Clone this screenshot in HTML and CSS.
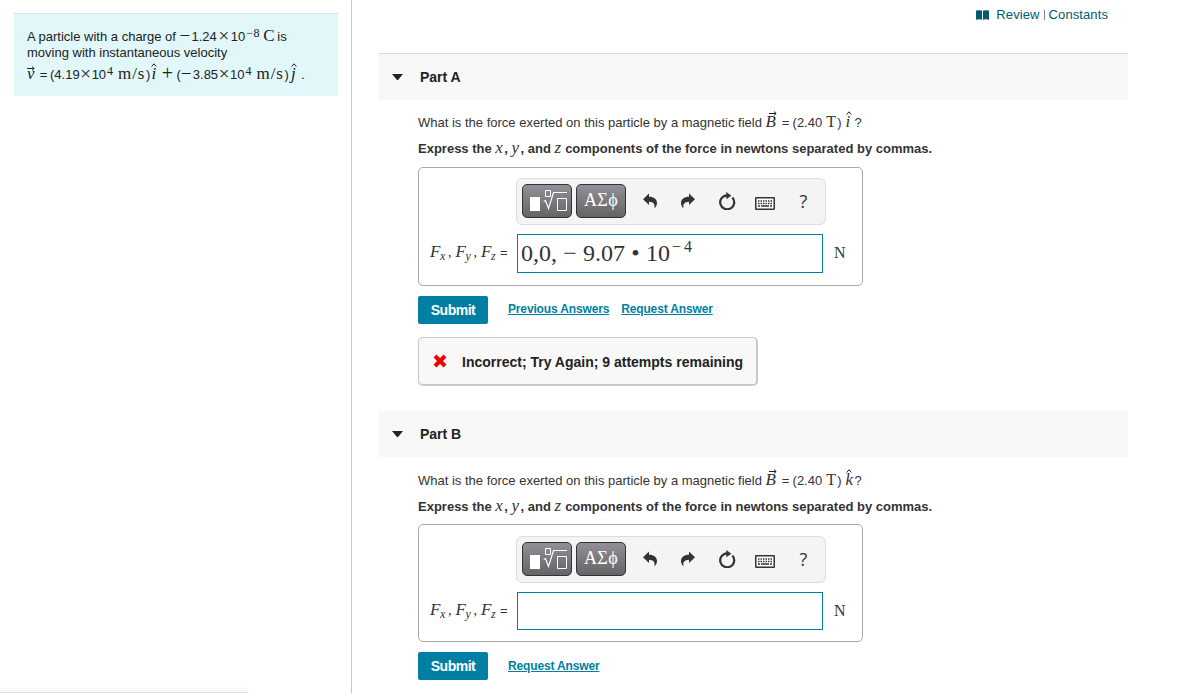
FILE: index.html
```html
<!DOCTYPE html>
<html lang="en">
<head>
    <meta charset="UTF-8">
    <meta name="viewport" content="width=device-width, initial-scale=1.0">
    <title>Magnetic force on a particle</title>
    <link rel="stylesheet" href="styles.css">
</head>
<body>
    <!-- shared icons -->
    <svg class="sprite" width="0" height="0">
        <symbol id="undo" viewBox="0 0 14 16">
            <path d="M0 6.200 6 .5v3.300C11 3.800 14 6.500 14 10c0 2-1 4-2.500 5.500C12.300 11 10.500 9 6 8.800v3.200z"/>
        </symbol>
        <symbol id="reset" viewBox="0 0 18 18">
            <path d="M10 3.300H9a7 7 0 1 0 5.300 2.200" fill="none" stroke="#333" stroke-width="2.200"/>
            <path d="M8.300 0 13.300 3.800 8.300 7.300z"/>
        </symbol>
        <symbol id="keyboard" viewBox="0 0 20 13">
            <rect x=".75" y=".75" width="18.500" height="11.500" rx=".5" fill="#fff" stroke="#333" stroke-width="1.500"/>
            <path d="M3 4h14M3 6.500h14" stroke="#333" stroke-width="1.300" stroke-dasharray="1.500 1" fill="none"/>
            <path d="M3 9h2M6 9h8M15 9h2" stroke="#333" stroke-width="1.300" fill="none"/>
        </symbol>
        <symbol id="root" viewBox="0 0 48 32">
            <path d="M7 12h10v14H7z" fill="#fff"/>
            <path d="M22.500 5.500h5v6h-5zM34.500 13.500h9v12h-9z" fill="none" stroke="#fff"/>
            <path d="M20.700 16.500 22.500 15.500l3 8L30.500 7.500H44" fill="none" stroke="#fff" stroke-width="1.200"/>
        </symbol>
        <symbol id="arrow" viewBox="0 0 8 5">
            <path d="M0 2.500h7M5 .5l2.200 2L5 4.500" fill="none" stroke="#222"/>
        </symbol>
        <symbol id="caron" viewBox="0 0 6 4">
            <path d="M.7 3.500 3 .8l2.300 2.700" fill="none" stroke="#222"/>
        </symbol>
    </svg>

    <aside class="sidebar">
        <div class="intro">
            <p class="charge">A particle with a charge of <span class="formula"><span class="minus">−</span><span>1.24</span><span class="times">×</span><span>10</span><span class="power wide">−8</span><span class="coulomb">C</span></span>is</p>
            <p>moving with instantaneous velocity</p>
            <p class="velocity"><span class="formula"><span class="vec v">v<svg class="arrow"><use href="#arrow"/></svg></span><span class="equals">=</span><span>(4.19</span><span class="times">×</span><span>10</span><span class="power">4</span><span class="unit">m/s</span><span>)</span><span class="hat">i<svg><use href="#caron"/></svg></span><span class="plus">+</span><span>(</span><span class="minus">−</span><span>3.85</span><span class="times">×</span><span>10</span><span class="power">4</span><span class="unit">m/s</span><span>)</span><span class="hat j">j<svg><use href="#caron"/></svg></span><span class="stop">.</span></span></p>
        </div>
    </aside>

    <main class="content">
        <div class="links">
            <svg class="book" viewBox="0 0 13 10"><path d="M0 .5Q3.500-.2 6 .5V9.700Q3.500 9 0 9.700zM13 .5Q9.500-.2 7 .5V9.700q2.500-.7 6 0z"/></svg>
            <a href="#">Review</a><i></i><a href="#">Constants</a>
        </div>

        <section class="part part-a">
            <h2><span class="caret"></span>Part A</h2>
            <div class="part-body">
                <p class="question">What is the force exerted on this particle by a magnetic field <span class="formula"><span class="vec big">B<svg class="arrow"><use href="#arrow"/></svg></span><span class="equals">=</span><span>(2.40</span><span class="tesla">T</span><span>)</span><span class="hat far">i<svg><use href="#caron"/></svg></span><span>?</span></span></p>
                <p class="instruction">Express the <em class="x">x</em>, <em class="y">y</em>, and <em class="z">z</em> components of the force in newtons separated by commas.</p>
                <div class="answer-box">
                    <div class="toolbar">
                        <button class="dark"><svg><use href="#root"/></svg></button>
                        <button class="dark">ΑΣϕ</button>
                        <button class="tool"><svg class="undo"><use href="#undo"/></svg></button>
                        <button class="tool"><svg class="undo redo"><use href="#undo"/></svg></button>
                        <button class="tool"><svg class="reset"><use href="#reset"/></svg></button>
                        <button class="tool"><svg class="keyboard"><use href="#keyboard"/></svg></button>
                        <button class="tool">?</button>
                    </div>
                    <div class="entry">
                        <div class="label"><em>F</em><sub>x</sub><span>,</span><em>F</em><sub>y</sub><span>,</span><em>F</em><sub>z</sub><b>=</b></div>
                        <div class="field">0,0,<span class="neg">−</span>9.07<span class="dot">•</span>10<sup>−<span>4</span></sup></div>
                        <div class="newton">N</div>
                    </div>
                </div>
                <div class="actions">
                    <button class="submit">Submit</button>
                    <a href="#">Previous Answers</a>
                    <a href="#">Request Answer</a>
                </div>
                <div class="feedback">
                    <svg viewBox="0 0 14 14"><path d="M2 2l10 10M12 2L2 12" stroke="#f00000" stroke-width="4"/></svg>
                    Incorrect; Try Again; 9 attempts remaining
                </div>
            </div>
        </section>

        <section class="part part-b">
            <h2><span class="caret"></span>Part B</h2>
            <div class="part-body">
                <p class="question">What is the force exerted on this particle by a magnetic field <span class="formula"><span class="vec big">B<svg class="arrow"><use href="#arrow"/></svg></span><span class="equals">=</span><span>(2.40</span><span class="tesla">T</span><span>)</span><span class="hat far k">k<svg><use href="#caron"/></svg></span><span>?</span></span></p>
                <p class="instruction">Express the <em class="x">x</em>, <em class="y">y</em>, and <em class="z">z</em> components of the force in newtons separated by commas.</p>
                <div class="answer-box">
                    <div class="toolbar">
                        <button class="dark"><svg><use href="#root"/></svg></button>
                        <button class="dark">ΑΣϕ</button>
                        <button class="tool"><svg class="undo"><use href="#undo"/></svg></button>
                        <button class="tool"><svg class="undo redo"><use href="#undo"/></svg></button>
                        <button class="tool"><svg class="reset"><use href="#reset"/></svg></button>
                        <button class="tool"><svg class="keyboard"><use href="#keyboard"/></svg></button>
                        <button class="tool">?</button>
                    </div>
                    <div class="entry">
                        <div class="label"><em>F</em><sub>x</sub><span>,</span><em>F</em><sub>y</sub><span>,</span><em>F</em><sub>z</sub><b>=</b></div>
                        <div class="field"></div>
                        <div class="newton">N</div>
                    </div>
                </div>
                <div class="actions">
                    <button class="submit">Submit</button>
                    <a href="#">Request Answer</a>
                </div>
            </div>
        </section>
    </main>
</body>
</html>
```

FILE: styles.css
```css
* {
    margin: 0;
    padding: 0;
    box-sizing: border-box;
}

body {
    display: flex;
    height: 693px;
    overflow: hidden;
    background-color: #fff;
    color: #333;
    font-family: "Liberation Sans", Arial, sans-serif;
    font-size: 13px;
}

.sprite {
    position: absolute;
}

button {
    border: none;
    background: none;
    font-family: inherit;
    color: inherit;
}

/* Sidebar */
.sidebar {
    display: flex;
    flex-direction: column;
    justify-content: space-between;
    width: 352px;
    flex: none;
    padding: 13px 13px 0 14px;
    border-right: 1px solid #b9c9da;
}

.sidebar::after {
    content: "";
    width: 248px;
    height: 1px;
    margin-left: -14px;
    background-color: #e2e2e2;
    box-shadow: 0 0 6px rgba(0, 0, 0, 0.25);
}

.intro {
    width: 324px;
    height: 83px;
    padding: 13px 13px 0;
    border-top: 1px solid #d5e1e4;
    background-color: #e1f7f9;
    color: #222;
    line-height: 16px;
    white-space: nowrap;
}

.intro p {
    height: 16px;
}

.intro .charge {
    height: 18px;
}

.intro .velocity {
    padding-top: 3px;
}

/* Formulas */
.formula {
    display: inline-flex;
    align-items: baseline;
    height: 16px;
    line-height: 16px;
}

.minus,
.times,
.plus,
.power,
.coulomb,
.unit,
.tesla,
.vec,
.hat {
    font-family: "Liberation Serif", "Times New Roman", serif;
}

.minus {
    width: 12px;
    font-size: 19px;
    transform: translateY(1px);
}

.times {
    width: 12px;
    font-size: 19px;
    text-align: center;
    transform: translateY(1px);
}

.charge .times {
    width: 14px;
}

.plus {
    width: 18px;
    font-size: 20px;
    text-align: center;
    transform: translateY(1px);
}

.power {
    position: relative;
    top: -4px;
    width: 6px;
    margin-left: 1px;
    font-size: 12px;
}

.power.wide {
    width: 15px;
    letter-spacing: 0.5px;
}

.coulomb {
    width: 16px;
    padding-left: 2px;
    font-size: 17px;
}

.unit {
    width: 33px;
    padding-left: 5px;
    font-size: 17px;
    letter-spacing: 0.9px;
}

.tesla {
    width: 15px;
    padding-left: 4px;
    font-size: 16px;
}

.equals {
    width: 13px;
    text-align: center;
}

.big + .equals {
    width: 14px;
}

.vec,
.hat {
    position: relative;
    font-size: 17px;
    font-style: italic;
}

.vec {
    width: 10px;
}

.vec.big {
    width: 13px;
}

.arrow {
    position: absolute;
    top: 0;
    left: 0;
    width: 8px;
    height: 5px;
}

.big .arrow {
    top: -3px;
    left: 3px;
}

.hat {
    width: 8px;
    padding-left: 1px;
}

.hat.j {
    width: 12px;
    padding-left: 2px;
}

.hat.far {
    width: 13px;
    padding-left: 4px;
}

.hat svg {
    position: absolute;
    top: -3px;
    right: 1px;
    width: 6px;
    height: 4px;
}

.hat.j svg {
    right: 4px;
}

.hat.far svg {
    right: 3px;
}

/* Content */
.content {
    width: 750px;
    margin-left: 26px;
}

.links {
    display: flex;
    align-items: center;
    justify-content: flex-end;
    height: 53px;
    padding: 0 20px 24px 0;
    color: #005a70;
}

.links a {
    color: #005a70;
    text-decoration: none;
    letter-spacing: 0.1px;
}

.links i {
    width: 1px;
    height: 10px;
    margin: 0 4px;
    background-color: #888;
}

.book {
    width: 13px;
    height: 10px;
    margin-right: 7px;
    fill: currentColor;
}

.part h2 {
    display: flex;
    align-items: center;
    height: 46px;
    padding-left: 14px;
    background-color: #f8f8f8;
    color: #222;
    font-size: 14px;
}

.part-a h2 {
    height: 47px;
    border-top: 1px solid #dcdcdc;
}

.caret {
    width: 11px;
    margin-right: 17px;
    border: solid transparent;
    border-width: 6px 5.5px 0;
    border-top-color: #222;
}

.part-body {
    padding: 14px 0 0 40px;
}

.question {
    height: 27px;
    line-height: 16px;
    white-space: nowrap;
}

.instruction {
    height: 26px;
    line-height: 16px;
    font-weight: bold;
    white-space: nowrap;
}

.instruction em {
    display: inline-block;
    width: 9px;
    font-family: "Liberation Serif", "Times New Roman", serif;
    font-size: 17px;
    font-weight: normal;
    line-height: 14px;
}

.instruction .z {
    width: 7px;
}

.answer-box {
    width: 445px;
    height: 119px;
    padding: 10px 11px 0;
    border: 1px solid #aaa;
    border-radius: 5px;
}

.toolbar {
    display: flex;
    align-items: center;
    width: 310px;
    height: 47px;
    margin-left: 86px;
    padding: 0 0 2px 5px;
    border: 1px solid #ddd;
    border-radius: 6px;
    background-color: #f4f4f4;
}

.dark {
    width: 50px;
    height: 34px;
    margin-right: 4px;
    border: 1px solid #333;
    border-radius: 5px;
    background: linear-gradient(#929097, #646467);
    color: #fff;
    font-family: "Liberation Serif", "Times New Roman", serif;
    font-size: 18px;
    letter-spacing: 0.3px;
}

.dark svg {
    display: block;
    width: 48px;
    height: 32px;
}

.tool {
    display: flex;
    align-items: center;
    justify-content: center;
    width: 38.3px;
    height: 34px;
    font-family: "Open Sans", sans-serif;
    font-size: 18px;
}

.toolbar .dark + .tool {
    margin-left: 1px;
}

.undo {
    width: 14px;
    height: 16px;
    fill: #333;
}

.redo {
    transform: scaleX(-1);
}

.reset {
    width: 18px;
    height: 18px;
    fill: #333;
}

.keyboard {
    width: 20px;
    height: 13px;
    margin-top: 5px;
}

.entry {
    display: flex;
    align-items: center;
    height: 39px;
    margin-top: 9px;
}

.label {
    display: flex;
    align-items: baseline;
    width: 87px;
    flex: none;
    margin-top: -3px;
    font-family: "Liberation Serif", "Times New Roman", serif;
    font-size: 17px;
}

.label em {
    width: 10px;
}

.label sub {
    width: 6px;
    font-size: 12px;
    font-style: italic;
    vertical-align: baseline;
    transform: translateY(3px);
}

.label span {
    width: 9.5px;
    padding-left: 2px;
    font-size: 14px;
}

.label b {
    margin-left: 3px;
    font-family: "Liberation Sans", Arial, sans-serif;
    font-size: 13px;
    font-weight: normal;
}

.field {
    display: flex;
    align-items: center;
    width: 306px;
    height: 39px;
    padding-left: 3px;
    border: 1px solid #007fa3;
    background-color: #fff;
    font-family: "Liberation Serif", "Times New Roman", serif;
    font-size: 24px;
}

.neg {
    width: 26px;
    text-align: center;
}

.dot {
    width: 21px;
    text-align: center;
}

.field sup {
    display: flex;
    gap: 3px;
    margin: -14px 0 0 2px;
    font-size: 16px;
}

.newton {
    margin: -1px 0 0 11px;
    font-family: "Liberation Serif", "Times New Roman", serif;
    font-size: 16px;
}

.actions {
    display: flex;
    align-items: center;
    height: 28px;
    margin-top: 10px;
}

.submit {
    width: 70px;
    height: 28px;
    margin-right: 20px;
    border-radius: 2px;
    background-color: #007fa3;
    color: #fff;
    font-size: 14px;
    font-weight: bold;
    letter-spacing: -0.5px;
}

.actions a {
    margin: -2px 12px 0 0;
    color: #007fa3;
    font-size: 12px;
    font-weight: bold;
    letter-spacing: -0.15px;
}

.feedback {
    display: flex;
    align-items: center;
    width: 340px;
    height: 49px;
    margin: 13px 0 25px;
    padding: 2px 0 0 14px;
    border: 1px solid #c8c8c8;
    border-right-width: 2px;
    border-bottom-width: 2px;
    border-radius: 5px;
    background-color: #f8f8f8;
    color: #222;
    font-size: 14px;
    font-weight: bold;
}

.feedback svg {
    width: 14px;
    height: 14px;
    margin: -2px 15px 0 0;
}

/* Part B sits one pixel lower under its borderless heading */
.part-b .part-body {
    padding-top: 15px;
}

.part-b .instruction {
    height: 25px;
}

.part-b .answer-box {
    height: 118px;
    padding-top: 11px;
}

.part-b .entry {
    height: 38px;
    margin-top: 9px;
}

.part-b .field {
    height: 38px;
}

.part-b .actions a {
    margin-top: 0;
}
```
